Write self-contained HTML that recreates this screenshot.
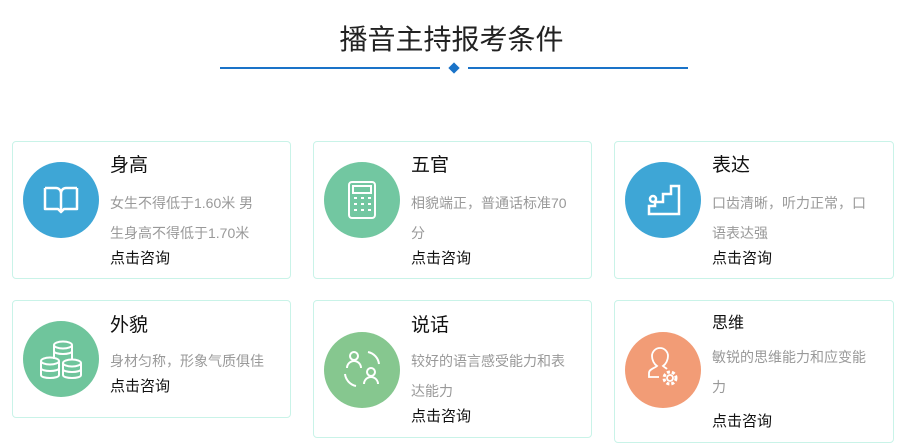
<!DOCTYPE html>
<html><head><meta charset="utf-8"><style>
*{margin:0;padding:0;box-sizing:border-box}
body{width:903px;height:448px;background:#fff;position:relative;overflow:hidden;font-family:"Liberation Sans","Noto Sans CJK SC",sans-serif}
.h{position:absolute;left:0;width:903px;top:20px;text-align:center;font-size:28px;color:#222;line-height:40px}
.ln{position:absolute;top:67px;height:2px;background:#1a73c8}
.dm{position:absolute;left:450px;top:64px;width:8px;height:8px;background:#1a73c8;transform:rotate(45deg)}
.c{position:absolute;border:1px solid #c9f3e8;border-radius:4px;background:#fff}
.ci{position:absolute;width:76px;height:76px;border-radius:50%}
.ci svg{position:absolute;left:0;top:0}
.t{position:absolute;font-size:19px;color:#111;line-height:24px;white-space:nowrap}
.d{position:absolute;font-size:14px;color:#999;line-height:30px;white-space:nowrap}
.k{position:absolute;font-size:15px;color:#111;line-height:20px}
</style></head><body>
<div class="h">播音主持报考条件</div>
<div class="ln" style="left:220px;width:220px"></div>
<div class="dm"></div>
<div class="ln" style="left:468px;width:220px"></div>

<div class="c" style="left:12px;top:141px;width:279px;height:138px"></div>
<div class="ci" style="left:23px;top:162px;background:#3ea6d6"><svg width="76" height="76" viewBox="0 0 76 76" fill="none" stroke="#fff" stroke-width="2.5" stroke-linejoin="round"><path d="M22 26h11a5 5 0 0 1 5 5v17M54 26H43a5 5 0 0 0-5 5M22 26v21h13l3 3 3-3h13V26"/></svg></div>
<div class="t" style="left:110px;top:154px">身高</div>
<div class="d" style="left:110px;top:188px">女生不得低于1.60米 男<br>生身高不得低于1.70米</div>
<div class="k" style="left:110px;top:249px">点击咨询</div>

<div class="c" style="left:313px;top:141px;width:279px;height:138px"></div>
<div class="ci" style="left:324px;top:162px;background:#72c7a1"><svg width="76" height="76" viewBox="0 0 76 76" fill="none" stroke="#fff" stroke-width="2"><rect x="25" y="20" width="26" height="36" rx="3"/><rect x="29" y="24" width="18" height="7"/><path d="M30 36h3M37 36h3M44 36h3M30 42h3M37 42h3M44 42h3M30 48h3M37 48h3M44 48h3"/></svg></div>
<div class="t" style="left:411px;top:154px">五官</div>
<div class="d" style="left:411px;top:188px">相貌端正，普通话标准70<br>分</div>
<div class="k" style="left:411px;top:249px">点击咨询</div>

<div class="c" style="left:614px;top:141px;width:280px;height:138px"></div>
<div class="ci" style="left:625px;top:162px;background:#3ea6d6"><svg width="76" height="76" viewBox="0 0 76 76" fill="none" stroke="#fff" stroke-width="2.5"><path d="M24 52h30V24h-8v8h-8v8h-8v4h-6z"/><circle cx="28" cy="37" r="3"/></svg></div>
<div class="t" style="left:712px;top:154px">表达</div>
<div class="d" style="left:712px;top:188px">口齿清晰，听力正常，口<br>语表达强</div>
<div class="k" style="left:712px;top:249px">点击咨询</div>

<div class="c" style="left:12px;top:300px;width:279px;height:118px"></div>
<div class="ci" style="left:23px;top:321px;background:#6fc59c"><svg width="76" height="76" viewBox="0 0 76 76" fill="none" stroke="#fff" stroke-width="2"><ellipse cx="40" cy="24" rx="9" ry="3.5"/><path d="M31 24v14M49 24v14M31 30c0 4 18 4 18 0"/><ellipse cx="27" cy="40" rx="9" ry="3.5"/><path d="M18 40v14c0 4 18 4 18 0V40M18 47c0 4 18 4 18 0"/><ellipse cx="49" cy="42" rx="9" ry="3.5"/><path d="M40 42v12c0 4 18 4 18 0V42M40 48c0 4 18 4 18 0"/></svg></div>
<div class="t" style="left:110px;top:314px">外貌</div>
<div class="d" style="left:110px;top:346px">身材匀称，形象气质俱佳</div>
<div class="k" style="left:110px;top:377px">点击咨询</div>

<div class="c" style="left:313px;top:300px;width:279px;height:138px"></div>
<div class="ci" style="left:324px;top:332px;background:#86c78f"><svg width="76" height="76" viewBox="0 0 76 76" fill="none" stroke="#fff" stroke-width="2"><circle cx="30" cy="24" r="4"/><path d="M23 36a7 7 0 0 1 14 0"/><circle cx="47" cy="40" r="4"/><path d="M40 52a7 7 0 0 1 14 0"/><path d="M44 20a14 14 0 0 1 11 12M21 42a14 14 0 0 0 11 12"/></svg></div>
<div class="t" style="left:411px;top:314px">说话</div>
<div class="d" style="left:411px;top:346px">较好的语言感受能力和表<br>达能力</div>
<div class="k" style="left:411px;top:407px">点击咨询</div>

<div class="c" style="left:614px;top:300px;width:280px;height:143px"></div>
<div class="ci" style="left:625px;top:332px;background:#f29c76"><svg width="76" height="76" viewBox="0 0 76 76" fill="none" stroke="#fff" stroke-width="1.8"><path d="M34 45h-10v-4c0-4 6-5 8-7-3-2-5-6-5-10a8 8 0 0 1 16 0c0 4-2 8-5 10 1 1 3 2 4 3"/><circle cx="45" cy="46" r="3"/><circle cx="45" cy="46" r="6" stroke-dasharray="3 2" stroke-width="3"/></svg></div>
<div class="t" style="left:712px;top:312px;font-size:16px">思维</div>
<div class="d" style="left:712px;top:342px">敏锐的思维能力和应变能<br>力</div>
<div class="k" style="left:712px;top:412px">点击咨询</div>
</body></html>
